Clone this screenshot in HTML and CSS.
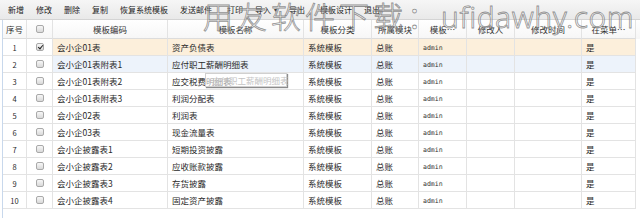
FILE: index.html
```html
<!DOCTYPE html>
<html lang="zh-CN">
<head>
<meta charset="utf-8">
<title>模板管理</title>
<link rel="stylesheet" href="styles.css">
</head>
<body>
<div class="page">
  <div class="toolbar">
    <span class="tb">新增</span>
    <span class="tb">修改</span>
    <span class="tb">删除</span>
    <span class="tb">复制</span>
    <span class="tb">恢复系统模板</span>
    <span class="tb wide">发送邮件</span>
    <span class="tb">打印</span>
    <span class="tb">导入<i class="arr">▾</i></span>
    <span class="tb wide">导出</span>
    <span class="tb">模板设计</span>
    <span class="tb">退出</span>
  </div>
  <div class="grid">
    <div class="row head">
      <div class="c num">序号</div>
      <div class="c chk"><span class="box"></span></div>
      <div class="c">模板编码</div>
      <div class="c">模板名称</div>
      <div class="c">模板分类</div>
      <div class="c">所属模块</div>
      <div class="c">模板…</div>
      <div class="c">修改人</div>
      <div class="c">修改时间</div>
      <div class="c">在菜单…</div>
    </div>
    <div class="row sel">
      <div class="c num">1</div><div class="c chk"><span class="box on"></span></div>
      <div class="c">会小企01表</div><div class="c">资产负债表</div><div class="c">系统模板</div><div class="c">总账</div><div class="c mono">admin</div><div class="c"></div><div class="c"></div><div class="c">是</div>
    </div>
    <div class="row hov">
      <div class="c num">2</div><div class="c chk"><span class="box"></span></div>
      <div class="c">会小企01表附表1</div><div class="c">应付职工薪酬明细表</div><div class="c">系统模板</div><div class="c">总账</div><div class="c mono">admin</div><div class="c"></div><div class="c"></div><div class="c">是</div>
    </div>
    <div class="row">
      <div class="c num">3</div><div class="c chk"><span class="box"></span></div>
      <div class="c">会小企01表附表2</div><div class="c">应交税费明细表</div><div class="c">系统模板</div><div class="c">总账</div><div class="c mono">admin</div><div class="c"></div><div class="c"></div><div class="c">是</div>
    </div>
    <div class="row">
      <div class="c num">4</div><div class="c chk"><span class="box"></span></div>
      <div class="c">会小企01表附表3</div><div class="c">利润分配表</div><div class="c">系统模板</div><div class="c">总账</div><div class="c mono">admin</div><div class="c"></div><div class="c"></div><div class="c">是</div>
    </div>
    <div class="row">
      <div class="c num">5</div><div class="c chk"><span class="box"></span></div>
      <div class="c">会小企02表</div><div class="c">利润表</div><div class="c">系统模板</div><div class="c">总账</div><div class="c mono">admin</div><div class="c"></div><div class="c"></div><div class="c">是</div>
    </div>
    <div class="row">
      <div class="c num">6</div><div class="c chk"><span class="box"></span></div>
      <div class="c">会小企03表</div><div class="c">现金流量表</div><div class="c">系统模板</div><div class="c">总账</div><div class="c mono">admin</div><div class="c"></div><div class="c"></div><div class="c">是</div>
    </div>
    <div class="row">
      <div class="c num">7</div><div class="c chk"><span class="box"></span></div>
      <div class="c">会小企披露表1</div><div class="c">短期投资披露</div><div class="c">系统模板</div><div class="c">总账</div><div class="c mono">admin</div><div class="c"></div><div class="c"></div><div class="c">是</div>
    </div>
    <div class="row">
      <div class="c num">8</div><div class="c chk"><span class="box"></span></div>
      <div class="c">会小企披露表2</div><div class="c">应收账款披露</div><div class="c">系统模板</div><div class="c">总账</div><div class="c mono">admin</div><div class="c"></div><div class="c"></div><div class="c">是</div>
    </div>
    <div class="row">
      <div class="c num">9</div><div class="c chk"><span class="box"></span></div>
      <div class="c">会小企披露表3</div><div class="c">存货披露</div><div class="c">系统模板</div><div class="c">总账</div><div class="c mono">admin</div><div class="c"></div><div class="c"></div><div class="c">是</div>
    </div>
    <div class="row">
      <div class="c num">10</div><div class="c chk"><span class="box"></span></div>
      <div class="c">会小企披露表4</div><div class="c">固定资产披露</div><div class="c">系统模板</div><div class="c">总账</div><div class="c mono">admin</div><div class="c"></div><div class="c"></div><div class="c">是</div>
    </div>
  </div>
  <div class="tooltip">应付职工薪酬明细表</div>
  <div class="watermark">用友软件下载：<span class="latin">ufidawhy.com</span></div>
</div>
</body>
</html>
```

FILE: styles.css
```css
* { box-sizing: border-box; }
html, body { margin: 0; padding: 0; background: #fff; }
body {
  font-family: "Noto Sans CJK SC", "Liberation Sans", sans-serif;
  color: #2a2a2a;
}
.page {
  position: relative;
  width: 640px;
  height: 218px;
  overflow: hidden;
}
.toolbar {
  height: 20px;
  display: flex;
  align-items: center;
  gap: 12px;
  padding-left: 8px;
  font-size: 8px;
  color: #222;
  background: linear-gradient(#f6f6f6, #e9e9e9);
  border-bottom: 1px solid #d4d4d4;
}
.tb { display: flex; align-items: center; white-space: nowrap; }
.tb.wide { padding-right: 3px; }
.arr {
  font-style: normal;
  font-size: 6px;
  margin-left: 3px;
  color: #444;
}
.grid {
  margin-left: 2px;
  border-left: 1px solid #c8d8ec;
  height: 198px;
}
.row {
  display: grid;
  grid-template-columns: 24px 26px 115px 136px 68px 47px 48px 48px 67px 54px;
  height: 17px;
  font-size: 8.5px;
}
.row.head { height: 19px; background: linear-gradient(#ffffff, #f6f6f6); }
.c {
  border-right: 1px solid #e3e3e3;
  border-bottom: 1px solid #e3e3e3;
  padding-left: 4px;
  display: flex;
  align-items: center;
  white-space: nowrap;
  overflow: hidden;
}
.head .c { justify-content: center; padding-left: 0; color: #333; border-bottom-color: #dcdcdc; }
.c.num { justify-content: center; padding-left: 0; font-size: 7.5px; }
.head .c.num { font-size: 8.5px; }
.c.chk { justify-content: center; padding-left: 0; }
.sel .c { background: #fcefdb; }
.hov .c { background: #edf3fb; }
.sel .c.num, .sel .c.chk, .hov .c.num, .hov .c.chk { background: #fff; }
.mono {
  font-family: "DejaVu Sans Mono", "Liberation Mono", monospace;
  font-size: 6.5px;
  padding-top: 2px;
  color: #333;
}
.box {
  width: 8px;
  height: 8px;
  border: 1px solid #a9a9a9;
  border-radius: 2px;
  background: linear-gradient(#f7f7f7, #d9d9d9);
  position: relative;
}
.box.on::after {
  content: "";
  position: absolute;
  left: 2px;
  top: 0px;
  width: 2px;
  height: 4px;
  border-right: 1.5px solid #222;
  border-bottom: 1.5px solid #222;
  transform: rotate(40deg);
}
.tooltip {
  position: absolute;
  left: 205px;
  top: 73px;
  width: 82px;
  height: 14px;
  padding-left: 6px;
  font-size: 8.5px;
  line-height: 12px;
  color: #c4c4c4;
  background: rgba(255, 255, 255, 0.55);
  border: 1px solid #d0d0d0;
  box-shadow: 1px 1px 1px rgba(0, 0, 0, 0.45);
  white-space: nowrap;
}
.watermark {
  position: absolute;
  left: 203px;
  top: 0;
  font-size: 30px;
  line-height: 30px;
  letter-spacing: 4px;
  white-space: nowrap;
  font-weight: 300;
  color: rgba(255, 255, 255, 0.35);
  -webkit-text-stroke: 0.8px rgba(110, 110, 110, 0.75);
  pointer-events: none;
}
.watermark .latin {
  font-family: "Noto Sans", "Liberation Sans", sans-serif;
  letter-spacing: 0.5px;
}
```
